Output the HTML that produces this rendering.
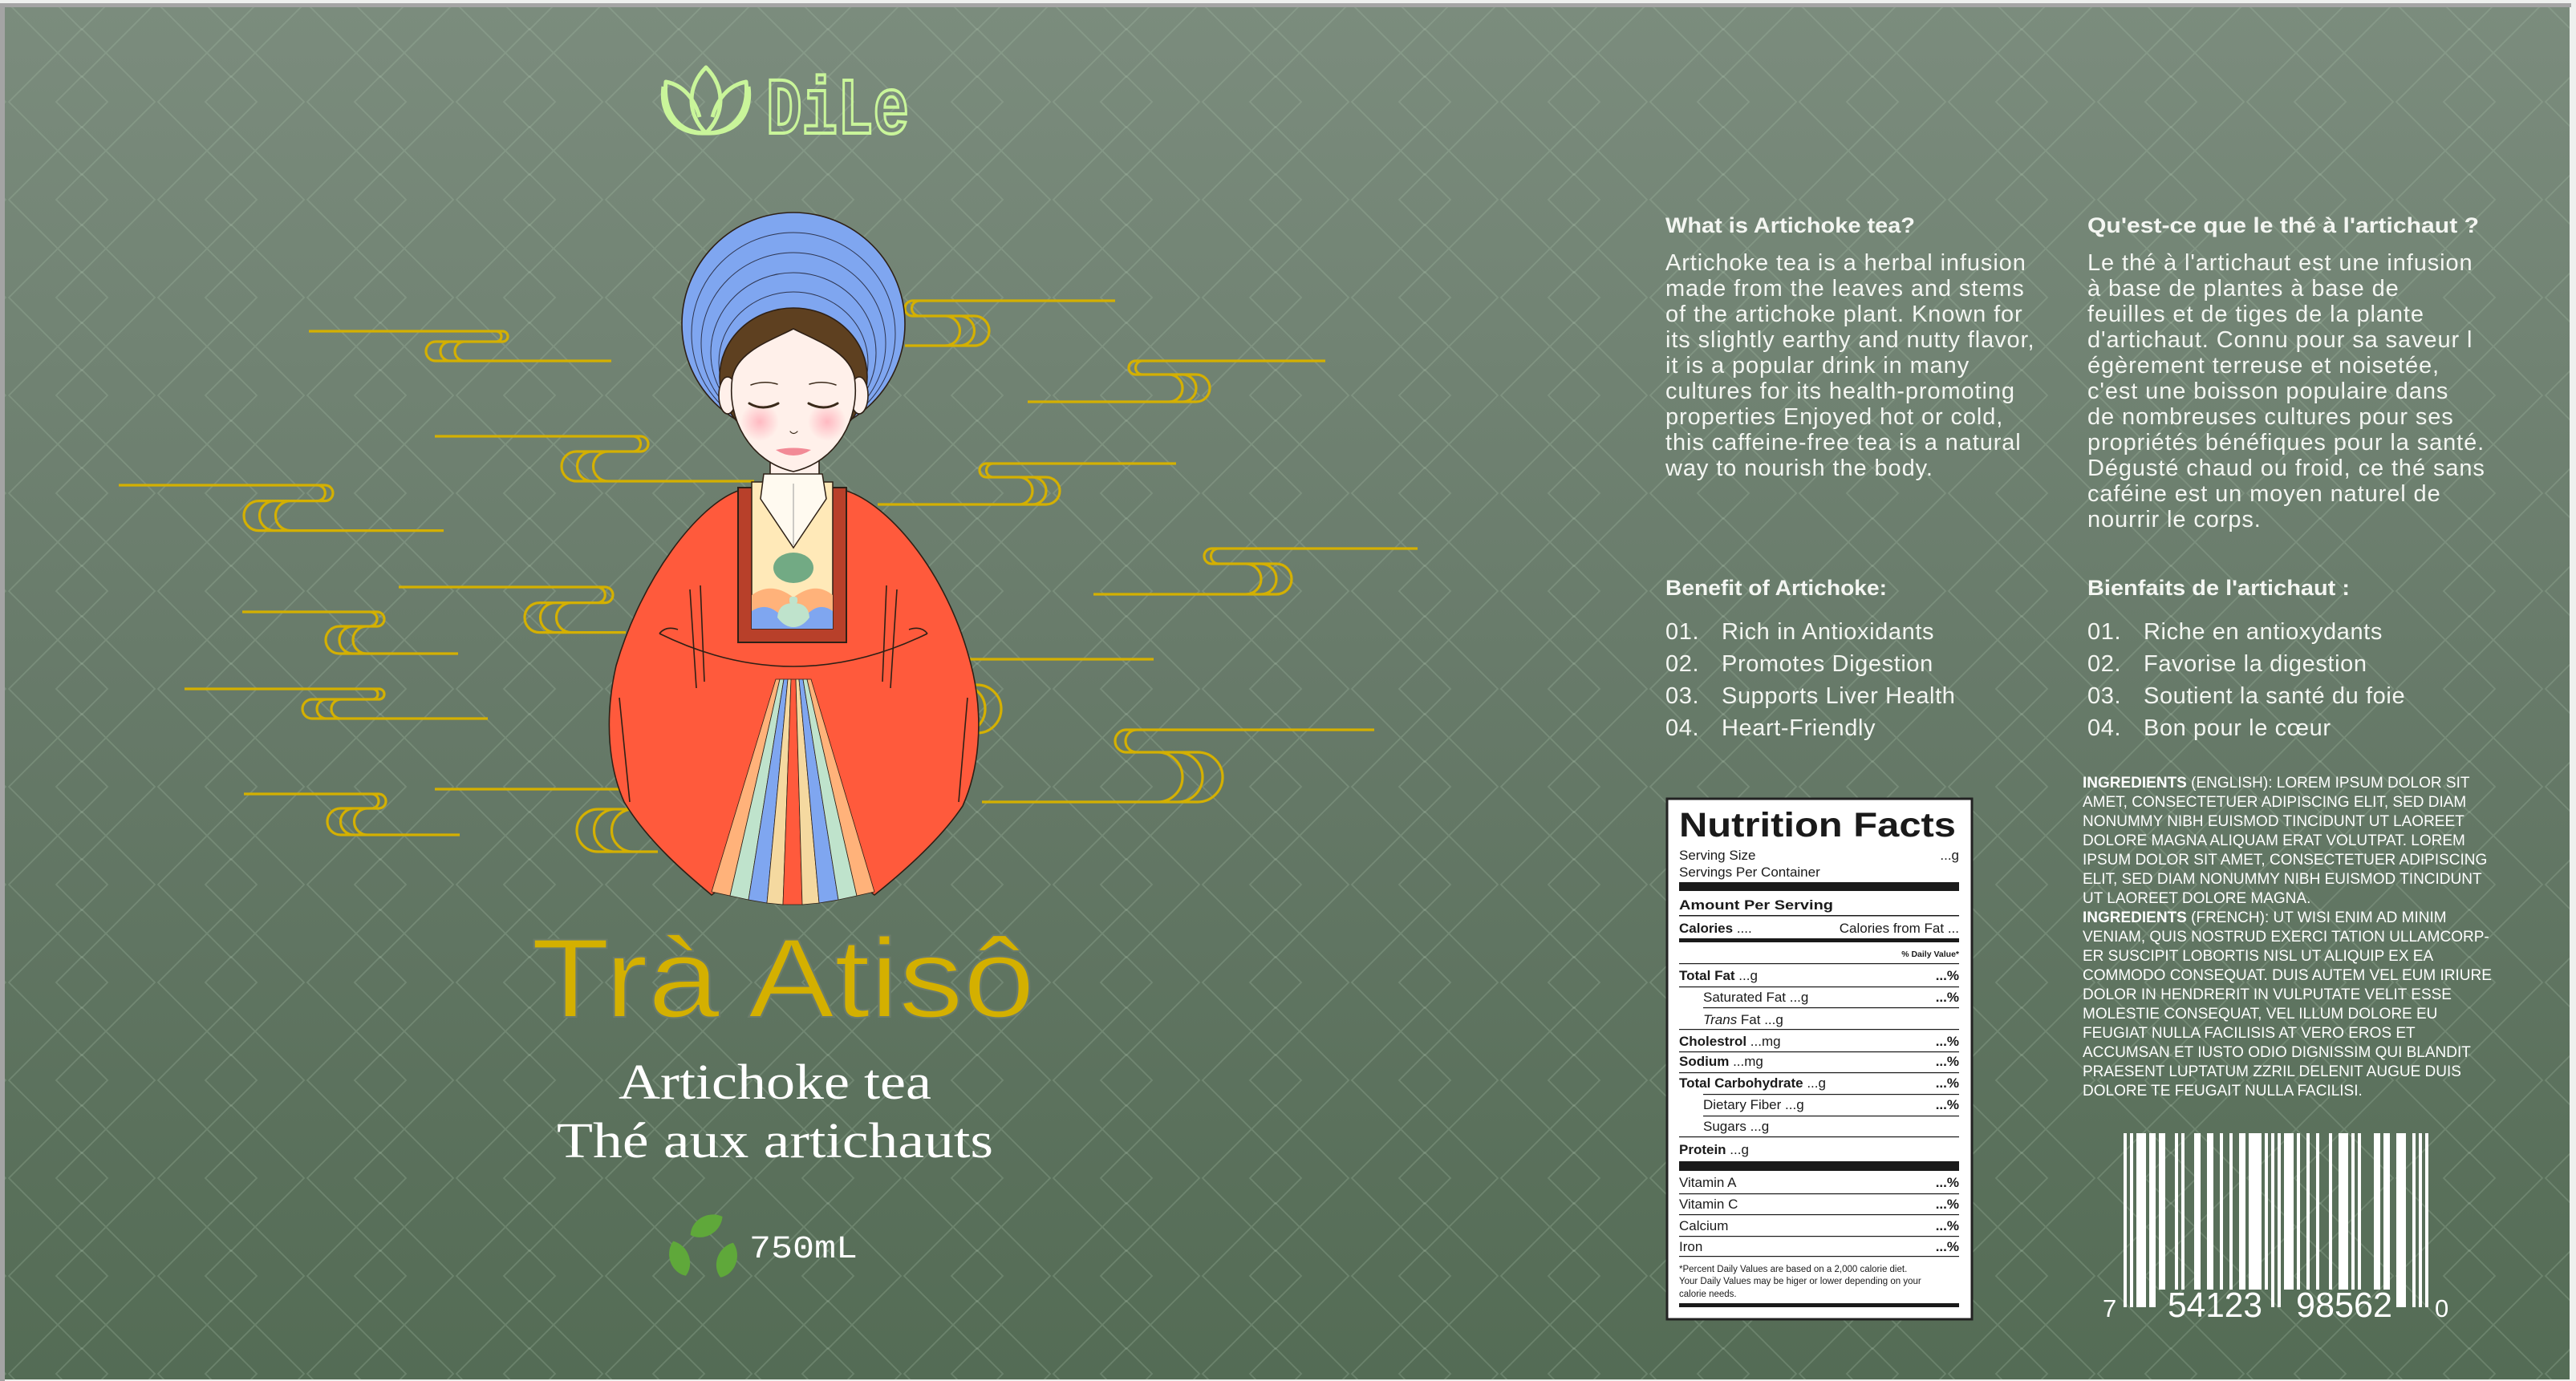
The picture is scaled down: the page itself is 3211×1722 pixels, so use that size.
<!DOCTYPE html>
<html><head><meta charset="utf-8">
<style>
html,body{margin:0;padding:0;background:#eef0ee;}
body{width:3211px;height:1722px;overflow:hidden;position:relative;}
svg{position:absolute;left:0;top:0;}
</style></head>
<body>
<svg width="3211" height="1722" viewBox="0 0 3211 1722" xmlns="http://www.w3.org/2000/svg">
<defs>
<linearGradient id="bg" x1="0" y1="0" x2="0" y2="1">
<stop offset="0" stop-color="#7b8c7d"/>
<stop offset="0.5" stop-color="#677a69"/>
<stop offset="1" stop-color="#546c55"/>
</linearGradient>
<pattern id="pat" patternUnits="userSpaceOnUse" x="9" y="66" width="186" height="122">
<g fill="none" stroke="#a9bfa8" stroke-opacity="0.26" stroke-width="1.8">
<path d="M2,61 L93,-30 L184,61 L93,152 Z M-184,61 L-93,-30 L-2,61 L-93,152 Z M188,61 L279,-30 L370,61 L279,152 Z M2,-61 L93,-152 L184,-61 L93,30 Z M2,183 L93,92 L184,183 L93,274 Z M-184,-61 L-93,-152 L-2,-61 L-93,30 Z M188,-61 L279,-152 L370,-61 L279,30 Z M-184,183 L-93,92 L-2,183 L-93,274 Z M188,183 L279,92 L370,183 L279,274 Z"/>
<path d="M61,61 L93,29 L125,61 L93,93 Z"/>
</g>
</pattern>
<radialGradient id="blush"><stop offset="0" stop-color="#ffb3bd" stop-opacity="0.9"/><stop offset="1" stop-color="#ffb3bd" stop-opacity="0"/></radialGradient>
</defs>

<rect x="0" y="4" width="3205" height="5" fill="#a4a4a4"/>
<rect x="0" y="4" width="6" height="1718" fill="#a4a4a4"/>
<rect x="6" y="9" width="3197" height="1711" fill="url(#bg)"/>
<rect x="6" y="9" width="3197" height="1711" fill="url(#pat)"/>

<g fill="none" stroke="#d4b000" stroke-width="3.2" stroke-linecap="butt">
<path d="M385,413 H626.5 A6.5,6.5 0 0 1 626.5,426 H543 A12,12 0 0 0 543,450 H762 M618.5,413 A6.5,6.5 0 0 1 618.5,426 M561,426 A12,12 0 0 0 561,450 M579,426 A12,12 0 0 0 579,450"/>
<path d="M542,544 H798.5 A9.5,9.5 0 0 1 798.5,563 H718.5 A18.5,18.5 0 0 0 718.5,600 H940 M789,544 A9.5,9.5 0 0 1 789,563 M738,563 A18.5,18.5 0 0 0 738,600 M758,563 A18.5,18.5 0 0 0 758,600"/>
<path d="M148,605 H405.2 A9.8,9.8 0 0 1 405.2,624.6 H322.5 A18.5,18.5 0 0 0 322.5,661.6 H553 M395.5,605 A9.8,9.8 0 0 1 395.5,624.6 M342,624.6 A18.5,18.5 0 0 0 342,661.6 M362,624.6 A18.5,18.5 0 0 0 362,661.6"/>
<path d="M497,732 H754.2 A9.8,9.8 0 0 1 754.2,751.6 H672.5 A18.5,18.5 0 0 0 672.5,788.6 H780 M744.5,732 A9.8,9.8 0 0 1 744.5,751.6 M692,751.6 A18.5,18.5 0 0 0 692,788.6 M712,751.6 A18.5,18.5 0 0 0 712,788.6"/>
<path d="M302,763 H470 A9,9 0 0 1 470,781 H423 A17,17 0 0 0 423,815 H571 M461,763 A9,9 0 0 1 461,781 M440,781 A17,17 0 0 0 440,815 M457,781 A17,17 0 0 0 457,815"/>
<path d="M230,859 H472.5 A6.5,6.5 0 0 1 472.5,872 H389 A12,12 0 0 0 389,896 H608 M464.5,859 A6.5,6.5 0 0 1 464.5,872 M407,872 A12,12 0 0 0 407,896 M425,872 A12,12 0 0 0 425,896"/>
<path d="M304,990 H472 A9,9 0 0 1 472,1008 H424.5 A16.5,16.5 0 0 0 424.5,1041 H573 M463,990 A9,9 0 0 1 463,1008 M441,1008 A16.5,16.5 0 0 0 441,1041 M458,1008 A16.5,16.5 0 0 0 458,1041"/>
<path d="M542,984 H800 M745.5,1009 A26.5,26.5 0 0 0 745.5,1062 H820 M745.5,1009 H820 M767,1009 A26.5,26.5 0 0 0 767,1062 M789,1009 A26.5,26.5 0 0 0 789,1062"/>
<path d="M1390,375 H1137.5 A9.5,9.5 0 0 0 1137.5,394 H1214.5 A18.5,18.5 0 0 1 1214.5,431 H1128 M1146,375 A9.5,9.5 0 0 0 1146,394 M1196,394 A18.5,18.5 0 0 1 1196,431 M1178,394 A18.5,18.5 0 0 1 1178,431"/>
<path d="M1652,450 H1415.5 A8.5,8.5 0 0 0 1415.5,467 H1491 A17,17 0 0 1 1491,501 H1281 M1424,450 A8.5,8.5 0 0 0 1424,467 M1474,467 A17,17 0 0 1 1474,501 M1457,467 A17,17 0 0 1 1457,501"/>
<path d="M1466,578 H1229.5 A8.5,8.5 0 0 0 1229.5,595 H1304 A17,17 0 0 1 1304,629 H1094 M1238,578 A8.5,8.5 0 0 0 1238,595 M1287,595 A17,17 0 0 1 1287,629 M1270,595 A17,17 0 0 1 1270,629"/>
<path d="M1767,684 H1510.5 A9.5,9.5 0 0 0 1510.5,703 H1591 A19,19 0 0 1 1591,741 H1363 M1519,684 A9.5,9.5 0 0 0 1519,703 M1572,703 A19,19 0 0 1 1572,741 M1553,703 A19,19 0 0 1 1553,741"/>
<path d="M1713,910 H1404 A14,14 0 0 0 1404,938 H1493 A31,31 0 0 1 1493,1000 H1224 M1417,910 A14,14 0 0 0 1417,938 M1468,938 A31,31 0 0 1 1468,1000 M1443,938 A31,31 0 0 1 1443,1000"/>
<path d="M1438,822 H1100 M1100,854 H1218 A30,30 0 0 1 1218,914 H1100 M1198,854 A30,30 0 0 1 1198,914"/>
</g>

<g fill="none" stroke="#c9f59a" stroke-width="5" stroke-linejoin="round">
<path d="M880,166 C856,142 856,108 880,84 C904,108 904,142 880,166 Z"/>
<path d="M880,166 C846,166 826,140 830,102 C852,106 866,124 872,146"/>
<path d="M880,166 C914,166 934,140 930,102 C908,106 894,124 888,146"/>
<path d="M880,166 C845,168 822,145 827,108 M880,166 C915,168 938,145 933,108"/>
</g>
<text x="955" y="166" font-family="Liberation Mono, monospace" font-size="100" font-weight="bold" fill="none" stroke="#c9f59a" stroke-width="4" textLength="178" lengthAdjust="spacingAndGlyphs">DiLe</text>

<g stroke="#2e2016" stroke-width="1.6">
<circle cx="989" cy="404" r="139" fill="#7fa6f0"/>
<g fill="none" stroke="#2e3550" stroke-width="1">
<ellipse cx="989" cy="416" rx="127" ry="126"/>
<ellipse cx="989" cy="428" rx="115" ry="113"/>
<ellipse cx="989" cy="440" rx="103" ry="100"/>
<ellipse cx="989" cy="452" rx="93" ry="88"/>
</g>
<ellipse cx="989" cy="470" rx="92" ry="86" fill="#5e4020"/>
<ellipse cx="907" cy="493" rx="11" ry="23" fill="#fff0ea"/>
<ellipse cx="1071" cy="493" rx="11" ry="23" fill="#fff0ea"/>
<rect x="960" y="570" width="61" height="36" fill="#fff0ea"/>
<path d="M920,612 C870,630 800,720 768,830 C752,900 760,960 778,1000 C808,1050 858,1092 887,1116 L960,1060 L1020,1060 L1090,1116 C1120,1092 1170,1050 1200,1005 C1220,960 1226,900 1213,840 C1186,720 1110,630 1055,612 Z" fill="#ff5a3c"/>
</g>
<g stroke="#2e2016" stroke-width="0.8">
<path d="M967,847 L972,847 L910,1117 L887,1112 Z" fill="#ffb27a"/>
<path d="M972,847 L977,847 L933,1122 L910,1117 Z" fill="#bfe3cc"/>
<path d="M977,847 L982,847 L956,1126 L933,1122 Z" fill="#7fa6f0"/>
<path d="M982,847 L986,847 L976,1128 L956,1126 Z" fill="#f5d9a0"/>
<path d="M986,847 L992,847 L1000,1128 L976,1128 Z" fill="#ff5a3c"/>
<path d="M992,847 L996,847 L1021,1126 L1000,1128 Z" fill="#f5d9a0"/>
<path d="M996,847 L1001,847 L1045,1122 L1021,1126 Z" fill="#7fa6f0"/>
<path d="M1001,847 L1006,847 L1068,1117 L1045,1122 Z" fill="#bfe3cc"/>
<path d="M1006,847 L1011,847 L1090,1112 L1068,1117 Z" fill="#ffb27a"/>
</g>
<g fill="none" stroke="#2e2016" stroke-width="1.6">
<path d="M822,790 Q989,872 1156,790"/>
<path d="M822,790 Q830,780 845,785 M1156,790 Q1148,780 1133,785"/>
<path d="M860,735 L868,858 M873,730 L878,850 M1118,735 L1110,858 M1105,730 L1100,850"/>
<path d="M772,870 L785,1000 M1206,870 L1195,1000"/>
</g>
<path d="M920,608 L1055,608 L1055,801 L920,801 Z" fill="#b8402a" stroke="#2e2016" stroke-width="2"/>
<rect x="937" y="601" width="101" height="183" fill="#ffe9b8" stroke="#2e2016" stroke-width="1.5"/>
<path d="M937,742 Q962,724 989,745 Q1016,724 1038,742 L1038,784 L937,784 Z" fill="#ffb27a"/>
<path d="M937,762 Q955,750 972,766 L1006,766 Q1022,750 1038,762 L1038,784 L937,784 Z" fill="#7fa6f0"/>
<path d="M969,770 Q970,752 989,752 Q1008,752 1009,770 Q1000,782 989,782 Q978,782 969,770 Z" fill="#bfe3cc"/>
<rect x="984" y="744" width="10" height="9" rx="3" fill="#bfe3cc"/>
<ellipse cx="989" cy="708" rx="25" ry="19" fill="#72aa84"/>
<path d="M952,591 L1025,591 L1030,622 L989,683 L948,622 Z" fill="#fffaf0" stroke="#2e2016" stroke-width="1.5"/>
<path d="M989,603 L989,680" stroke="#999" stroke-width="1"/>
<path d="M989,410 C960,425 920,438 913,470 C905,522 935,576 989,588 C1043,576 1073,522 1065,470 C1058,438 1018,425 989,410 Z" fill="#fff0ea" stroke="#2e2016" stroke-width="1.6"/>
<circle cx="947" cy="526" r="24" fill="url(#blush)"/>
<circle cx="1031" cy="526" r="24" fill="url(#blush)"/>
<g fill="none" stroke="#3a2a1a" stroke-linecap="round">
<path d="M936,480 Q952,474 969,479" stroke-width="1.5"/>
<path d="M1009,479 Q1026,474 1042,480" stroke-width="1.5"/>
<path d="M934,503 Q951,513 970,503" stroke-width="3"/>
<path d="M1008,503 Q1027,513 1044,503" stroke-width="3"/>
<path d="M985,538 Q989,543 994,538" stroke-width="1.2"/>
</g>
<path d="M967,561 Q989,556 1011,561 Q989,575 967,561 Z" fill="#f28a96"/>

<text x="662" y="1268" font-family="Liberation Sans, sans-serif" font-size="140" fill="#d4b000" stroke="#6b7c6b" stroke-width="2" textLength="628" lengthAdjust="spacingAndGlyphs">Trà Atisô</text>
<text x="771" y="1370" font-family="Liberation Serif, serif" font-size="62" fill="#ffffff" textLength="390" lengthAdjust="spacingAndGlyphs">Artichoke tea</text>
<text x="694" y="1443" font-family="Liberation Serif, serif" font-size="62" fill="#ffffff" textLength="544" lengthAdjust="spacingAndGlyphs">Thé aux artichauts</text>
<g fill="#5fa83a">
<path transform="translate(878,1530) rotate(60)" d="M0,-26 C16,-15 16,10 0,20 C-16,10 -16,-15 0,-26 Z"/>
<path transform="translate(848,1572) rotate(-20)" d="M0,-26 C16,-15 16,10 0,20 C-16,10 -16,-15 0,-26 Z"/>
<path transform="translate(905,1574) rotate(20)" d="M0,-26 C16,-15 16,10 0,20 C-16,10 -16,-15 0,-26 Z"/>
</g>
<text x="934" y="1568" font-family="Liberation Mono, monospace" font-size="40" fill="#ffffff" textLength="135" lengthAdjust="spacingAndGlyphs">750mL</text>

<g font-family="Liberation Sans, sans-serif" fill="#f4f6f2">
<text x="2076" y="290" font-size="27" font-weight="bold" textLength="311" lengthAdjust="spacingAndGlyphs">What is Artichoke tea?</text>
<text x="2602" y="290" font-size="27" font-weight="bold" textLength="488" lengthAdjust="spacingAndGlyphs">Qu'est-ce que le thé à l'artichaut ?</text>
<g font-size="29" letter-spacing="0.9">
<text x="2076" y="337">Artichoke tea is a herbal infusion</text>
<text x="2076" y="369">made from the leaves and stems</text>
<text x="2076" y="401">of the artichoke plant. Known for</text>
<text x="2076" y="433">its slightly earthy and nutty flavor,</text>
<text x="2076" y="465">it is a popular drink in many</text>
<text x="2076" y="497">cultures for its health-promoting</text>
<text x="2076" y="529">properties Enjoyed hot or cold,</text>
<text x="2076" y="561">this caffeine-free tea is a natural</text>
<text x="2076" y="593">way to nourish the body.</text>
<text x="2602" y="337">Le thé à l'artichaut est une infusion</text>
<text x="2602" y="369">à base de plantes à base de</text>
<text x="2602" y="401">feuilles et de tiges de la plante</text>
<text x="2602" y="433">d'artichaut. Connu pour sa saveur l</text>
<text x="2602" y="465">égèrement terreuse et noisetée,</text>
<text x="2602" y="497">c'est une boisson populaire dans</text>
<text x="2602" y="529">de nombreuses cultures pour ses</text>
<text x="2602" y="561">propriétés bénéfiques pour la santé.</text>
<text x="2602" y="593">Dégusté chaud ou froid, ce thé sans</text>
<text x="2602" y="625">caféine est un moyen naturel de</text>
<text x="2602" y="657">nourrir le corps.</text>
</g>
<text x="2076" y="742" font-size="27" font-weight="bold" textLength="276" lengthAdjust="spacingAndGlyphs">Benefit of Artichoke:</text>
<text x="2602" y="742" font-size="27" font-weight="bold" textLength="327" lengthAdjust="spacingAndGlyphs">Bienfaits de l'artichaut :</text>
<g font-size="29" letter-spacing="0.6">
<text x="2076" y="797">01.</text><text x="2146" y="797">Rich in Antioxidants</text>
<text x="2076" y="837">02.</text><text x="2146" y="837">Promotes Digestion</text>
<text x="2076" y="877">03.</text><text x="2146" y="877">Supports Liver Health</text>
<text x="2076" y="917">04.</text><text x="2146" y="917">Heart-Friendly</text>
<text x="2602" y="797">01.</text><text x="2672" y="797">Riche en antioxydants</text>
<text x="2602" y="837">02.</text><text x="2672" y="837">Favorise la digestion</text>
<text x="2602" y="877">03.</text><text x="2672" y="877">Soutient la santé du foie</text>
<text x="2602" y="917">04.</text><text x="2672" y="917">Bon pour le cœur</text>
</g>
<g font-size="19" fill="#ffffff">
<text x="2596" y="982"><tspan font-weight="bold">INGREDIENTS</tspan> (ENGLISH): LOREM IPSUM DOLOR SIT</text>
<text x="2596" y="1006">AMET, CONSECTETUER ADIPISCING ELIT, SED DIAM</text>
<text x="2596" y="1030">NONUMMY NIBH EUISMOD TINCIDUNT UT LAOREET</text>
<text x="2596" y="1054">DOLORE MAGNA ALIQUAM ERAT VOLUTPAT. LOREM</text>
<text x="2596" y="1078">IPSUM DOLOR SIT AMET, CONSECTETUER ADIPISCING</text>
<text x="2596" y="1102">ELIT, SED DIAM NONUMMY NIBH EUISMOD TINCIDUNT</text>
<text x="2596" y="1126">UT LAOREET DOLORE MAGNA.</text>
<text x="2596" y="1150"><tspan font-weight="bold">INGREDIENTS</tspan> (FRENCH): UT WISI ENIM AD MINIM</text>
<text x="2596" y="1174">VENIAM, QUIS NOSTRUD EXERCI TATION ULLAMCORP-</text>
<text x="2596" y="1198">ER SUSCIPIT LOBORTIS NISL UT ALIQUIP EX EA</text>
<text x="2596" y="1222">COMMODO CONSEQUAT. DUIS AUTEM VEL EUM IRIURE</text>
<text x="2596" y="1246">DOLOR IN HENDRERIT IN VULPUTATE VELIT ESSE</text>
<text x="2596" y="1270">MOLESTIE CONSEQUAT, VEL ILLUM DOLORE EU</text>
<text x="2596" y="1294">FEUGIAT NULLA FACILISIS AT VERO EROS ET</text>
<text x="2596" y="1318">ACCUMSAN ET IUSTO ODIO DIGNISSIM QUI BLANDIT</text>
<text x="2596" y="1342">PRAESENT LUPTATUM ZZRIL DELENIT AUGUE DUIS</text>
<text x="2596" y="1366">DOLORE TE FEUGAIT NULLA FACILISI.</text>
</g>
</g>

<g fill="#ffffff">
<rect x="2647" y="1413" width="4" height="217"/><rect x="2655" y="1413" width="4" height="217"/>
<rect x="2663" y="1413" width="12" height="217"/><rect x="2679" y="1413" width="8" height="217"/>
<rect x="2691" y="1413" width="8" height="195"/><rect x="2711" y="1413" width="4" height="195"/>
<rect x="2719" y="1413" width="4" height="195"/><rect x="2735" y="1413" width="8" height="195"/>
<rect x="2751" y="1413" width="8" height="195"/><rect x="2767" y="1413" width="4" height="195"/>
<rect x="2779" y="1413" width="4" height="195"/><rect x="2791" y="1413" width="8" height="195"/>
<rect x="2803" y="1413" width="16" height="195"/><rect x="2823" y="1413" width="4" height="195"/>
<rect x="2831" y="1413" width="4" height="217"/><rect x="2839" y="1413" width="4" height="217"/>
<rect x="2847" y="1413" width="12" height="195"/><rect x="2863" y="1413" width="4" height="195"/>
<rect x="2875" y="1413" width="4" height="195"/><rect x="2887" y="1413" width="4" height="195"/>
<rect x="2903" y="1413" width="4" height="195"/><rect x="2915" y="1413" width="12" height="195"/>
<rect x="2931" y="1413" width="4" height="195"/><rect x="2939" y="1413" width="4" height="195"/>
<rect x="2959" y="1413" width="8" height="195"/><rect x="2971" y="1413" width="8" height="195"/>
<rect x="2987" y="1413" width="12" height="217"/><rect x="3007" y="1413" width="4" height="217"/>
<rect x="3015" y="1413" width="4" height="217"/><rect x="3023" y="1413" width="4" height="217"/>
<g font-family="Liberation Sans, sans-serif">
<text x="2621" y="1642" font-size="31">7</text>
<text x="2702" y="1642" font-size="44" textLength="118" lengthAdjust="spacingAndGlyphs">54123</text>
<text x="2862" y="1642" font-size="44" textLength="120" lengthAdjust="spacingAndGlyphs">98562</text>
<text x="3035" y="1642" font-size="31">0</text>
</g>
</g>

<rect x="2078" y="996" width="380" height="649" fill="#ffffff" stroke="#222" stroke-width="3"/>
<g font-family="Liberation Sans, sans-serif" fill="#1a1a1a">
<text x="2093" y="1043" font-size="43" font-weight="bold" textLength="345" lengthAdjust="spacingAndGlyphs">Nutrition Facts</text>
<text x="2093" y="1072" font-size="17">Serving Size</text>
<text x="2442" y="1072" font-size="17" text-anchor="end">...g</text>
<text x="2093" y="1093" font-size="17">Servings Per Container</text>
<rect x="2093" y="1100" width="349" height="11"/>
<text x="2093" y="1134" font-size="17" font-weight="bold" textLength="192" lengthAdjust="spacingAndGlyphs">Amount Per Serving</text>
<rect x="2093" y="1141" width="349" height="1.5"/>
<text x="2093" y="1163" font-size="17"><tspan font-weight="bold">Calories</tspan> ....</text>
<text x="2442" y="1163" font-size="17" text-anchor="end">Calories from Fat ...</text>
<rect x="2093" y="1170" width="349" height="5"/>
<text x="2442" y="1193" font-size="10.5" font-weight="bold" text-anchor="end">% Daily Value*</text>
<rect x="2093" y="1201" width="349" height="1.2"/>
<g font-size="17">
<text x="2093" y="1222"><tspan font-weight="bold">Total Fat</tspan> ...g</text><text x="2442" y="1222" text-anchor="end" font-weight="bold">...%</text>
<rect x="2093" y="1230" width="349" height="1.2"/>
<text x="2123" y="1249">Saturated Fat ...g</text><text x="2442" y="1249" text-anchor="end" font-weight="bold">...%</text>
<rect x="2123" y="1256" width="319" height="1.2"/>
<text x="2123" y="1277"><tspan font-style="italic">Trans</tspan> Fat ...g</text>
<rect x="2093" y="1283" width="349" height="1.2"/>
<text x="2093" y="1304"><tspan font-weight="bold">Cholestrol</tspan> ...mg</text><text x="2442" y="1304" text-anchor="end" font-weight="bold">...%</text>
<rect x="2093" y="1311" width="349" height="1.2"/>
<text x="2093" y="1329"><tspan font-weight="bold">Sodium</tspan> ...mg</text><text x="2442" y="1329" text-anchor="end" font-weight="bold">...%</text>
<rect x="2093" y="1337" width="349" height="1.2"/>
<text x="2093" y="1356"><tspan font-weight="bold">Total Carbohydrate</tspan> ...g</text><text x="2442" y="1356" text-anchor="end" font-weight="bold">...%</text>
<rect x="2123" y="1364" width="319" height="1.2"/>
<text x="2123" y="1383">Dietary Fiber ...g</text><text x="2442" y="1383" text-anchor="end" font-weight="bold">...%</text>
<rect x="2123" y="1391" width="319" height="1.2"/>
<text x="2123" y="1410">Sugars ...g</text>
<rect x="2093" y="1417" width="349" height="1.2"/>
<text x="2093" y="1439"><tspan font-weight="bold">Protein</tspan> ...g</text>
<rect x="2093" y="1448" width="349" height="12"/>
<text x="2093" y="1480">Vitamin A</text><text x="2442" y="1480" text-anchor="end" font-weight="bold">...%</text>
<rect x="2093" y="1488" width="349" height="1.2"/>
<text x="2093" y="1507">Vitamin C</text><text x="2442" y="1507" text-anchor="end" font-weight="bold">...%</text>
<rect x="2093" y="1514" width="349" height="1.2"/>
<text x="2093" y="1534">Calcium</text><text x="2442" y="1534" text-anchor="end" font-weight="bold">...%</text>
<rect x="2093" y="1541" width="349" height="1.2"/>
<text x="2093" y="1560">Iron</text><text x="2442" y="1560" text-anchor="end" font-weight="bold">...%</text>
<rect x="2093" y="1566" width="349" height="1.2"/>
</g>
<g font-size="11.5">
<text x="2093" y="1586">*Percent Daily Values are based on a 2,000 calorie diet.</text>
<text x="2093" y="1601">Your Daily Values may be higer or lower depending on your</text>
<text x="2093" y="1617">calorie needs.</text>
</g>
<rect x="2093" y="1625" width="349" height="5"/>
</g>
</svg>
</body></html>
